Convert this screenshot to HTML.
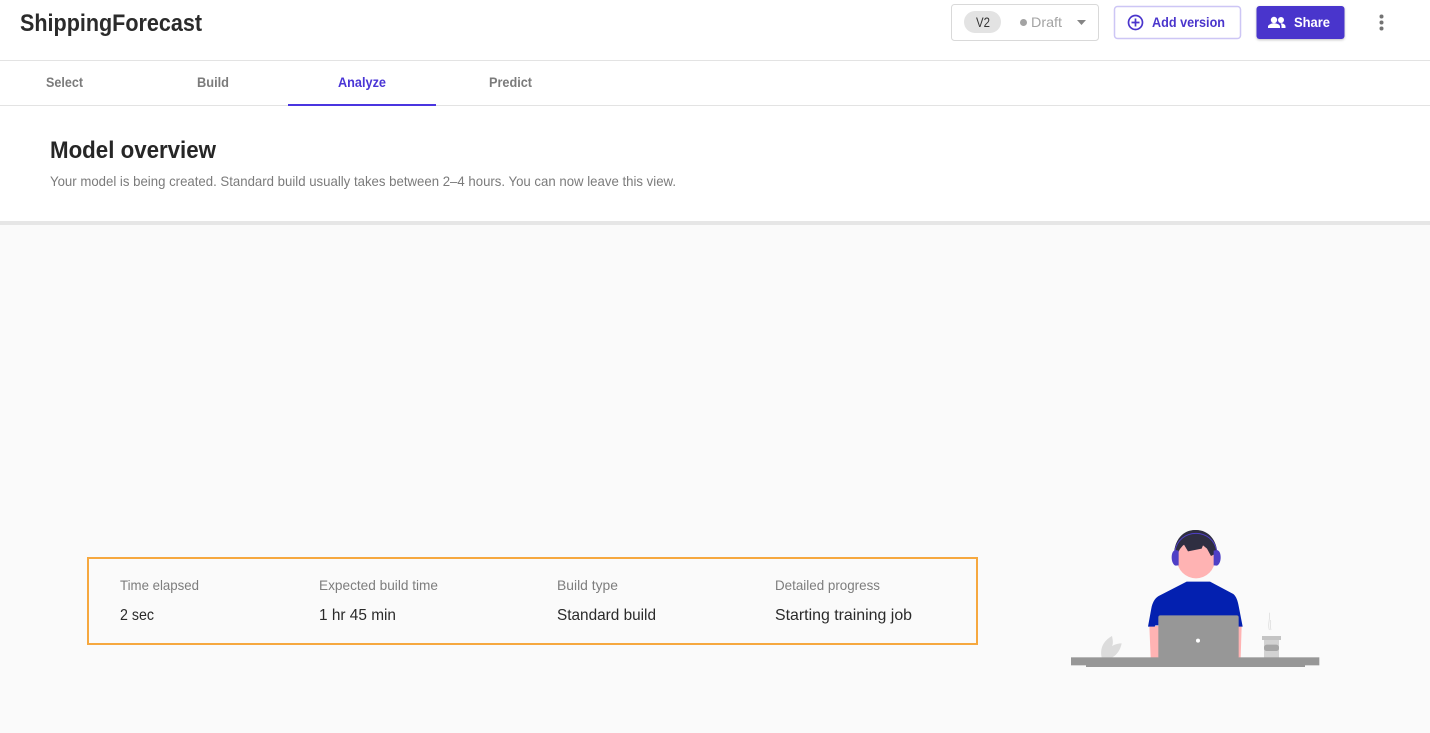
<!DOCTYPE html>
<html lang="en">
<head>
<meta charset="utf-8">
<title>ShippingForecast</title>
<style>
html,body{margin:0;padding:0;background:#fff;width:1430px;height:733px;overflow:hidden}
svg{display:block}
text{font-family:"Liberation Sans",sans-serif}
.b{font-weight:700}
.tab{font-size:14px;font-weight:700;fill:#7b7b7b}
.lab{font-size:14px;fill:#7d7d7d}
.val{font-size:16px;fill:#2a2a2a}
</style>
</head>
<body>
<svg width="1430" height="733" viewBox="0 0 1430 733" xmlns="http://www.w3.org/2000/svg">
<defs>
<filter id="s" x="-10%" y="-20%" width="120%" height="150%"><feDropShadow dx="0" dy="1" stdDeviation="1.2" flood-color="#000" flood-opacity=".25"/></filter>
</defs>
<rect width="1430" height="733" fill="#fff"/>
<!-- header -->
<text x="20" y="31" class="b" font-size="24" fill="#2b2b2b" textLength="182" lengthAdjust="spacingAndGlyphs">ShippingForecast</text>
<rect x="951.5" y="4.5" width="147" height="36" rx="3" fill="#fff" stroke="#d9d9d9"/>
<rect x="964" y="11" width="37" height="22" rx="11" fill="#e3e3e3"/>
<text x="976" y="27" font-size="14" fill="#333" textLength="14" lengthAdjust="spacingAndGlyphs">V2</text>
<circle cx="1023.500" cy="22.500" r="3.500" fill="#a3a3a3"/>
<text x="1031" y="27" font-size="14" fill="#a3a3a3" textLength="31" lengthAdjust="spacingAndGlyphs">Draft</text>
<path d="M1077 20h9l-4.500 5z" fill="#858585"/>
<rect x="1114.500" y="6.500" width="126" height="32" rx="3" fill="#fff" stroke="#cdc6f5" stroke-width="1.500"/>
<circle cx="1135.500" cy="22.500" r="7" fill="none" stroke="#4a35cc" stroke-width="1.700"/>
<path d="M1135.500 18.500v8M1131.500 22.500h8" stroke="#4a35cc" stroke-width="1.700" fill="none"/>
<text x="1152" y="27" class="b" font-size="14" fill="#4a35cc" textLength="73" lengthAdjust="spacingAndGlyphs">Add version</text>
<rect x="1256.500" y="6" width="88" height="33" rx="3" fill="#4a35cc" filter="url(#s)"/>
<g fill="#fff">
<circle cx="1274" cy="20" r="3.200"/>
<circle cx="1281" cy="20" r="3"/>
<path d="M1268 28v-1.500c0-2 3.700-3.200 6-3.200s6 1.200 6 3.200V28z"/>
<path d="M1280.500 23.300c2.200 0 5 1 5 3.200V28h-4v-1.500c0-1.300-.3-2.300-1-3.200z"/>
</g>
<text x="1294" y="27" class="b" font-size="14" fill="#fff" textLength="36" lengthAdjust="spacingAndGlyphs">Share</text>
<g fill="#737373"><circle cx="1381.500" cy="16.500" r="2"/><circle cx="1381.500" cy="22.500" r="2"/><circle cx="1381.500" cy="28.500" r="2"/></g>
<!-- tabs -->
<rect x="0" y="60" width="1430" height="1" fill="#e3e3e3"/>
<rect x="0" y="105" width="1430" height="1" fill="#e3e3e3"/>
<text x="46" y="87" class="tab" textLength="37" lengthAdjust="spacingAndGlyphs">Select</text>
<text x="197" y="87" class="tab" textLength="32" lengthAdjust="spacingAndGlyphs">Build</text>
<text x="338" y="87" class="tab" style="fill:#4a35d6" textLength="48" lengthAdjust="spacingAndGlyphs">Analyze</text>
<text x="489" y="87" class="tab" textLength="43" lengthAdjust="spacingAndGlyphs">Predict</text>
<rect x="288" y="104" width="148" height="2" fill="#4a35e0"/>
<!-- overview -->
<text x="50" y="158" class="b" font-size="24" fill="#262626" textLength="166" lengthAdjust="spacingAndGlyphs">Model overview</text>
<text x="50" y="186" font-size="14" fill="#7b7b7b" textLength="626" lengthAdjust="spacingAndGlyphs">Your model is being created. Standard build usually takes between 2–4 hours. You can now leave this view.</text>
<rect x="0" y="225" width="1430" height="508" fill="#fafafa"/>
<rect x="0" y="221" width="1430" height="4" fill="#e6e6e6"/>
<!-- stats -->
<rect x="88" y="558" width="889" height="86" fill="#fafafa" stroke="#f6a83f" stroke-width="2"/>
<text x="120" y="590" class="lab" textLength="79" lengthAdjust="spacingAndGlyphs">Time elapsed</text>
<text x="319" y="590" class="lab" textLength="119" lengthAdjust="spacingAndGlyphs">Expected build time</text>
<text x="557" y="590" class="lab" textLength="61" lengthAdjust="spacingAndGlyphs">Build type</text>
<text x="775" y="590" class="lab" textLength="105" lengthAdjust="spacingAndGlyphs">Detailed progress</text>
<text x="120" y="620" class="val" textLength="34" lengthAdjust="spacingAndGlyphs">2 sec</text>
<text x="319" y="620" class="val" textLength="77" lengthAdjust="spacingAndGlyphs">1 hr 45 min</text>
<text x="557" y="620" class="val" textLength="99" lengthAdjust="spacingAndGlyphs">Standard build</text>
<text x="775" y="620" class="val" textLength="137" lengthAdjust="spacingAndGlyphs">Starting training job</text>
<!-- illustration -->
<g transform="translate(1060 520) scale(.33333)">
<path d="M125 412c-6-28 6-50 31-64 4 18 3 24 0 30 10-6 20-8 29-8-4 20-14 34-28 42z" fill="#dcdcdc"/>
<path d="M268 318h28v95h-24zM535 318h10l-3 95h-7z" fill="#ffb3b3"/>
<path d="M380 185h70l70 37c9 8 13 20 16 36l12 62h-19v-4H286l-2 4h-20l10-55c3-16 10-30 22-37z" fill="#0320b0"/>
<rect x="295" y="286" width="241" height="130" rx="6" fill="#979797"/>
<circle cx="414" cy="362" r="6" fill="#fff"/>
<path d="M628 330c-6-18 3-30 0-52M633 330c-3-12 0-20-1-30" stroke="#d8d8d8" stroke-width="2" fill="none"/>
<rect x="612" y="358" width="45" height="56" fill="#d2d2d2"/>
<rect x="606" y="348" width="57" height="12" fill="#c4c4c4"/>
<rect x="612" y="374" width="45" height="19" rx="8" fill="#a6a6a6"/>
<rect x="33" y="412" width="745" height="24" fill="#979797"/>
<rect x="78" y="434" width="657" height="7" fill="#979797"/>
<path d="M342 105c0-44 28-75 66-75s64 31 64 75z" fill="#2f2e41"/>
<circle cx="408" cy="118" r="57" fill="#ffb3b3"/>
<path d="M350 108c2-16 12-30 22-34l12 20 41-8 4-10 12 10 12 22 12-6c0-44-26-72-60-72-36 0-62 30-62 72z" fill="#2f2e41"/>
<path d="M335 112c0-12 4-20 11-22l10 2v44l-9 1c-7-2-12-12-12-25z" fill="#4f3fc6"/>
<path d="M482 112c0-12-4-20-11-22l-10 2v44l9 1c7-2 12-12 12-25z" fill="#4f3fc6"/>
<path d="M345 92c6-32 32-52 63-52s56 20 62 52" fill="none" stroke="#4f3fc6" stroke-width="3"/>
</g>
</svg>
</body>
</html>
